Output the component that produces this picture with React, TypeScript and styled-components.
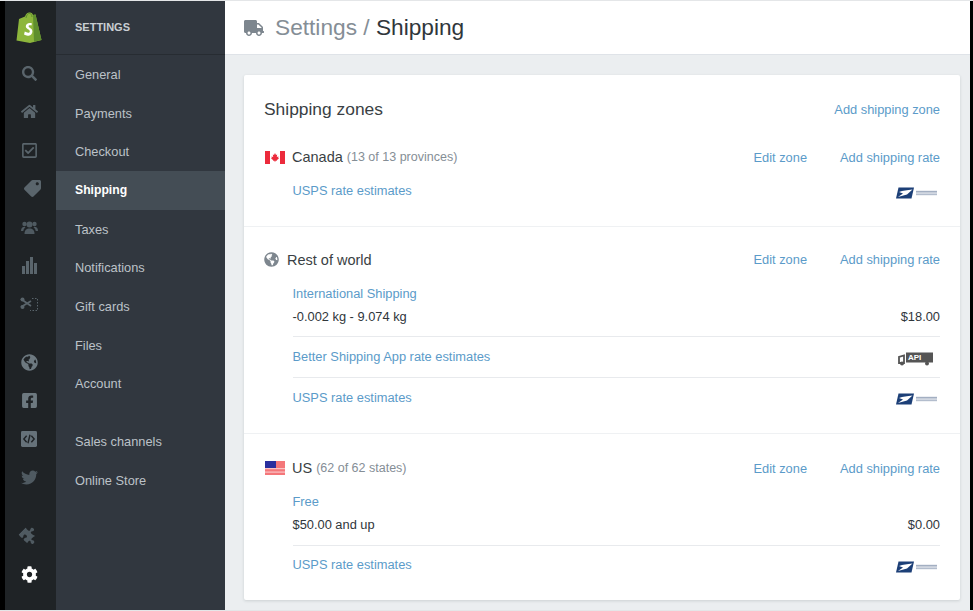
import React from 'react';
import styled, {createGlobalStyle} from "styled-components";
import {
    FaSearch, FaHome, FaTag, FaGlobeAmericas, FaFacebookSquare,
    FaTwitter, FaPuzzlePiece, FaCog, FaTruck, FaRegCheckSquare,
} from "react-icons/fa";

const GlobalStyle = createGlobalStyle`
    html, body {
        margin: 0;
        height: 100%;
        background: #000;
    }
    body {
        font-family: "Liberation Sans", Arial, sans-serif;
        color: #3a3f44;
    }
    a { text-decoration: none; }
`

const ShopifyLogo = () => (
    <svg width="26" height="31" viewBox="0 0 26 31">
        <path d="M3 7 L9 4.5 C10 1.5 12 0 14 0.5 C15.5 0.5 16.5 1.5 17 3 L19.5 2.5 L25.5 28 L14 31 L0.5 28.5 Z" fill="#8db63c"/>
        <path d="M19.5 2.5 L25.5 28 L18 29.8 L17 3 Z" fill="#5f8e2e"/>
        <path d="M10 6 C10.5 3 12 1.2 13.8 1.4 C15 1.6 15.8 3 16 5" fill="none" stroke="#5f8e2e" strokeWidth="1"/>
        <path d="M16 11.5 C13 10.2 9.8 11.5 9.8 14.3 C9.8 17.2 13.8 17.4 13.8 19.4 C13.8 21.2 11 21 8.8 19.6 L8 22.6 C11 24.6 16.4 24 16.4 19.2 C16.4 16 12.6 15.8 12.6 14.2 C12.6 13.2 14 12.8 15.4 13.6 Z" fill="#fff"/>
    </svg>
)

const CodeSquare = () => (
    <svg width="16" height="16" viewBox="0 0 17 17">
        <rect width="17" height="17" rx="1.5" fill="#66727a"/>
        <path d="M6 5 L3 8.5 L6 12 M11 5 L14 8.5 L11 12 M9.6 4 L7.4 13" fill="none" stroke="#1f2326" strokeWidth="1.5"/>
    </svg>
)

const UsersIcon = () => (
    <svg width="17" height="15" viewBox="0 0 17 15" fill="#4f5a61">
        <circle cx="8.5" cy="4.5" r="3"/>
        <path d="M3.5 14 C3.5 10 5.5 8.5 8.5 8.5 C11.5 8.5 13.5 10 13.5 14 Z"/>
        <circle cx="3.5" cy="4" r="2.2"/>
        <circle cx="13.5" cy="4" r="2.2"/>
        <path d="M0 11 C0 8 1.5 6.8 3.5 6.8 L4.5 7.5 C3 8.5 2.5 9.5 2.3 11 Z M17 11 C17 8 15.5 6.8 13.5 6.8 L12.5 7.5 C14 8.5 14.5 9.5 14.7 11 Z"/>
    </svg>
)

const BarsIcon = () => (
    <svg width="15" height="17" viewBox="0 0 15 17" fill="#5a656c">
        <rect x="0" y="9" width="3" height="8"/>
        <rect x="4" y="4" width="3" height="13"/>
        <rect x="8" y="0" width="3" height="17"/>
        <rect x="12" y="6" width="3" height="11"/>
    </svg>
)

const CouponIcon = () => (
    <svg width="18" height="15" viewBox="0 0 18 15">
        <path d="M1 2 L11 9 M1 10 L11 4" stroke="#59646b" strokeWidth="1.8" fill="none"/>
        <circle cx="2.5" cy="2.5" r="2" fill="#59646b"/>
        <circle cx="2.5" cy="10" r="2" fill="#59646b"/>
        <path d="M12 1.5 H17.5 V13.5 H10" stroke="#59646b" strokeWidth="1" strokeDasharray="1.5 1.5" fill="none"/>
    </svg>
)

const CanadaFlag = () => (
    <svg width="20" height="13" viewBox="0 0 20 13">
        <rect width="20" height="13" fill="#fff"/>
        <rect width="5" height="13" fill="#ec2b3c"/>
        <rect x="15" width="5" height="13" fill="#ec2b3c"/>
        <path d="M10 2 L11 4 L12.2 3.6 L11.8 6 L13.6 5.4 L13.2 7 L14 7.4 L11.6 9.2 L11.8 10 L10.3 9.8 L10.3 11 L9.7 11 L9.7 9.8 L8.2 10 L8.4 9.2 L6 7.4 L6.8 7 L6.4 5.4 L8.2 6 L7.8 3.6 L9 4 Z" fill="#ec2b3c"/>
    </svg>
)

const UsFlag = () => (
    <svg width="20" height="14" viewBox="0 0 20 14">
        <rect width="20" height="14" fill="#f4777a"/>
        <rect y="7" width="20" height="1.2" fill="#fbc4c5"/>
        <rect y="10.5" width="20" height="1.2" fill="#fbc4c5"/>
        <rect width="11" height="7" fill="#2a2f9e"/>
    </svg>
)

const UspsLogo = () => (
    <svg width="42" height="12" viewBox="0 0 42 12">
        <path d="M2.5 0.5 L18 0.5 L15.5 11.5 L0 11.5 Z" fill="#1c3f77"/>
        <path d="M3 5 C7 3.5 11 3.5 16.5 2.5 L11 7.5 L2 10 L7 6.5 Z" fill="#fff"/>
        <rect x="20" y="3.8" width="21" height="1.8" fill="#a3afc2"/>
        <rect x="20" y="6.4" width="21" height="1.8" fill="#b3bdcd"/>
    </svg>
)

const ApiLogo = () => (
    <svg width="35" height="14" viewBox="0 0 35 14">
        <rect x="8" y="0.5" width="27" height="10" fill="#555"/>
        <path d="M1 11 L1 5 L6 3.5 L6 11 Z" fill="none" stroke="#555" strokeWidth="1.8"/>
        <circle cx="4" cy="11.5" r="2" fill="#555"/>
        <circle cx="29" cy="11.5" r="2" fill="#555"/>
        <text x="10" y="8.4" fontFamily="Liberation Sans" fontSize="8" fontWeight="700" fill="#fff">API</text>
    </svg>
)

const navItems = ['General', 'Payments', 'Checkout', 'Shipping', 'Taxes', 'Notifications', 'Gift cards', 'Files', 'Account']

export default function App() {
    return (
        <>
            <GlobalStyle/>
            <Frame>
                <Rail>
                    <LogoSlot><ShopifyLogo/></LogoSlot>
                    <RailIcon $size={15}><FaSearch/></RailIcon>
                    <RailIcon><FaHome/></RailIcon>
                    <RailIcon><FaRegCheckSquare/></RailIcon>
                    <RailIcon $flip><FaTag/></RailIcon>
                    <RailIcon><UsersIcon/></RailIcon>
                    <RailIcon><BarsIcon/></RailIcon>
                    <RailIcon><CouponIcon/></RailIcon>
                    <RailIcon $gap $color="#6d7980"><FaGlobeAmericas/></RailIcon>
                    <RailIcon $color="#6d7980"><FaFacebookSquare/></RailIcon>
                    <RailIcon><CodeSquare/></RailIcon>
                    <RailIcon $color="#4f5a61"><FaTwitter/></RailIcon>
                    <RailIcon $gap $turn $color="#4f5a61"><FaPuzzlePiece/></RailIcon>
                    <RailIcon $color="#fff"><FaCog/></RailIcon>
                </Rail>

                <SideNav>
                    <NavHeader>SETTINGS</NavHeader>
                    <NavList>
                        {navItems.map(item => (
                            <NavItem key={item} $active={item === 'Shipping'}>{item}</NavItem>
                        ))}
                        <NavItem $spaced>Sales channels</NavItem>
                        <NavItem>Online Store</NavItem>
                    </NavList>
                </SideNav>

                <Main>
                    <TopBar>
                        <TruckIcon><FaTruck/></TruckIcon>
                        <Crumb>Settings / <span>Shipping</span></Crumb>
                    </TopBar>
                    <Content>
                        <Card>
                            <CardHead>
                                <CardTitle>Shipping zones</CardTitle>
                                <Link>Add shipping zone</Link>
                            </CardHead>

                            <Zone $top={16} $bottom={15}>
                                <ZoneHead>
                                    <ZoneName>
                                        <FlagSlot><CanadaFlag/></FlagSlot>
                                        Canada <Muted>(13 of 13 provinces)</Muted>
                                    </ZoneName>
                                    <ZoneActions><Link>Edit zone</Link><Link>Add shipping rate</Link></ZoneActions>
                                </ZoneHead>
                                <Rates>
                                    <Rate $plain>
                                        <Link>USPS rate estimates</Link>
                                        <LogoSlotRight><UspsLogo/></LogoSlotRight>
                                    </Rate>
                                </Rates>
                            </Zone>

                            <Zone $top={23}>
                                <ZoneHead>
                                    <ZoneName>
                                        <GlobeSlot><FaGlobeAmericas/></GlobeSlot>
                                        Rest of world
                                    </ZoneName>
                                    <ZoneActions><Link>Edit zone</Link><Link>Add shipping rate</Link></ZoneActions>
                                </ZoneHead>
                                <Rates>
                                    <Rate>
                                        <div>
                                            <Link>International Shipping</Link>
                                            <RateDetail>-0.002 kg - 9.074 kg</RateDetail>
                                        </div>
                                        <Price>$18.00</Price>
                                    </Rate>
                                    <Rate>
                                        <Link>Better Shipping App rate estimates</Link>
                                        <LogoSlotRight $inset={7}><ApiLogo/></LogoSlotRight>
                                    </Rate>
                                    <Rate $plain>
                                        <Link>USPS rate estimates</Link>
                                        <LogoSlotRight><UspsLogo/></LogoSlotRight>
                                    </Rate>
                                </Rates>
                            </Zone>

                            <Zone $top={24}>
                                <ZoneHead>
                                    <ZoneName>
                                        <FlagSlot><UsFlag/></FlagSlot>
                                        US <Muted>(62 of 62 states)</Muted>
                                    </ZoneName>
                                    <ZoneActions><Link>Edit zone</Link><Link>Add shipping rate</Link></ZoneActions>
                                </ZoneHead>
                                <Rates>
                                    <Rate>
                                        <div>
                                            <Link>Free</Link>
                                            <RateDetail>$50.00 and up</RateDetail>
                                        </div>
                                        <Price>$0.00</Price>
                                    </Rate>
                                    <Rate $plain>
                                        <Link>USPS rate estimates</Link>
                                        <LogoSlotRight><UspsLogo/></LogoSlotRight>
                                    </Rate>
                                </Rates>
                            </Zone>
                        </Card>
                    </Content>
                </Main>
            </Frame>
        </>
    );
}

const Frame = styled.div`
    display: flex;
    width: 973px;
    height: 611px;
    box-sizing: border-box;
    padding: 0 3px 0 5px;
    border-top: 1px solid #e4e6e8;
    border-bottom: 1px solid #e4e6e8;
    background: #000;
    overflow: hidden;
`
const Rail = styled.nav`
    width: 51px;
    flex-shrink: 0;
    background: #1f2326;
    display: flex;
    flex-direction: column;
    align-items: center;
`
const LogoSlot = styled.div`
    height: 53px;
    padding-right: 3px;
    display: flex;
    align-items: center;
    justify-content: center;
`
const RailIcon = styled.div<{ $gap?: boolean; $color?: string; $size?: number; $flip?: boolean; $turn?: boolean }>`
    height: 38.5px;
    flex-shrink: 0;
    margin-top: ${p => p.$gap ? '19.5px' : '0'};
    padding-right: 3px;
    display: flex;
    align-items: center;
    justify-content: center;
    font-size: ${p => p.$size ?? 17}px;
    color: ${p => p.$color ?? '#5a656c'};
    transform: ${p => p.$flip ? 'scaleX(-1)' : p.$turn ? 'rotate(45deg)' : 'none'};
`
const SideNav = styled.aside`
    width: 169px;
    flex-shrink: 0;
    background: #31373f;
    display: flex;
    flex-direction: column;
`
const NavHeader = styled.div`
    height: 54px;
    box-sizing: border-box;
    flex-shrink: 0;
    padding: 0 0 2px 19px;
    display: flex;
    align-items: center;
    font-size: 11px;
    font-weight: 700;
    color: #c9ced3;
    border-bottom: 1px solid #272c32;
`
const NavList = styled.div`
    display: flex;
    flex-direction: column;
`
const NavItem = styled.div<{ $active?: boolean; $spaced?: boolean }>`
    height: 38.7px;
    flex-shrink: 0;
    margin-top: ${p => p.$spaced ? '19px' : '0'};
    padding-left: 19px;
    display: flex;
    align-items: center;
    font-size: ${p => p.$active ? 12.2 : 12.8}px;
    color: ${p => p.$active ? '#fff' : '#bcc2c8'};
    font-weight: ${p => p.$active ? 700 : 400};
    background: ${p => p.$active ? '#444d55' : 'transparent'};
`
const Main = styled.main`
    flex: 1;
    min-width: 0;
    background: #ebeef0;
    display: flex;
    flex-direction: column;
`
const TopBar = styled.header`
    height: 54px;
    box-sizing: border-box;
    flex-shrink: 0;
    padding-left: 19px;
    display: flex;
    align-items: center;
    gap: 11px;
    background: #fff;
    border-bottom: 1px solid #dfe3e8;
`
const TruckIcon = styled.span`
    display: flex;
    font-size: 20px;
    color: #7d868e;
`
const Crumb = styled.h1`
    margin: 0;
    font-size: 22.7px;
    font-weight: 400;
    color: #858e96;
    span { color: #30363b; }
`
const Content = styled.div`
    padding: 20px 10px 0 19px;
`
const Card = styled.section`
    height: 525px;
    background: #fff;
    border-radius: 2px;
    box-shadow: 0 1px 3px rgba(60, 70, 80, 0.18);
`
const CardHead = styled.div`
    height: 56px;
    padding: 12px 20px 0;
    box-sizing: border-box;
    display: flex;
    justify-content: space-between;
    align-items: center;
`
const CardTitle = styled.h2`
    margin: 0;
    font-size: 17.4px;
    font-weight: 400;
    color: #3a3f44;
`
const Link = styled.a`
    display: block;
    font-size: 12.85px;
    color: #5b9bc9;
`
const Zone = styled.div<{ $top: number; $bottom?: number }>`
    padding: ${p => p.$top}px 20px ${p => p.$bottom ?? 16}px;
    border-bottom: 1px solid #eff1f3;
    &:last-child { border-bottom: 0; }
`
const ZoneHead = styled.div`
    display: flex;
    justify-content: space-between;
    align-items: center;
    height: 20px;
`
const ZoneName = styled.div`
    display: flex;
    align-items: center;
    font-size: 14.5px;
    color: #3a3f44;
    white-space: pre;
`
const Muted = styled.span`
    font-size: 12.5px;
    color: #858e96;
`
const FlagSlot = styled.span`
    display: flex;
    width: 28px;
    padding-left: 1px;
    box-sizing: border-box;
`
const GlobeSlot = styled.span`
    display: flex;
    width: 23px;
    font-size: 15px;
    color: #7d868e;
`
const ZoneActions = styled.div`
    display: flex;
    gap: 33px;
`
const Rates = styled.div`
    padding-left: 28.5px;
`
const Rate = styled.div<{ $plain?: boolean }>`
    display: flex;
    justify-content: space-between;
    align-items: center;
    padding: 11.5px 0 12.5px;
    border-bottom: ${p => p.$plain ? '0' : '1px solid #e8eaed'};
    &:first-child { padding-top: 16px; }
`
const LogoSlotRight = styled.div<{ $inset?: number }>`
    display: flex;
    margin: 3px ${p => p.$inset ?? 2}px -1px 0;
`
const RateDetail = styled.div`
    margin-top: 8px;
    font-size: 12.85px;
    color: #30363b;
`
const Price = styled.div`
    align-self: flex-end;
    font-size: 12.85px;
    color: #30363b;
`
